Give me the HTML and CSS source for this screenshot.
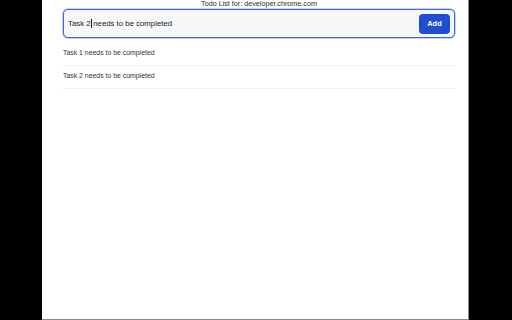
FILE: index.html
```html
<!DOCTYPE html>
<html>
<head>
<meta charset="utf-8">
<link rel="stylesheet" href="styles.css">
</head>
<body>
<div class="page">
  <div class="title">Todo List for: developer.chrome.com</div>
  <div class="entry">
    <div class="field">Task 2<span class="caret"></span> needs to be completed</div>
    <button class="add">Add</button>
  </div>
  <ul class="list">
    <li class="item">Task 1 needs to be completed</li>
    <li class="item">Task 2 needs to be completed</li>
  </ul>
</div>
</body>
</html>
```
FILE: styles.css
```css
html, body {
  margin: 0;
  padding: 0;
  background: #000;
  height: 320px;
  overflow: hidden;
}
body {
  font-family: "Liberation Sans", Arial, sans-serif;
  color: #222;
}
.page {
  margin-left: 42px;
  width: 392px;
  height: 319px;
  padding: 0 13px 0 21px;
  background: #fff;
  border-right: 1px solid #8a8a8a;
  border-bottom: 1px solid #8a8a8a;
}
.title {
  height: 9px;
  font-size: 7.2px;
  line-height: 8px;
  text-align: center;
  color: #2a2a2a;
}
.entry {
  display: flex;
  align-items: center;
  justify-content: space-between;
  height: 27px;
  border: 1px solid #4169d6;
  box-shadow: 0 0 0 0.5px #8aa3e6;
  border-radius: 5px;
  background: #f6f7f9;
  padding: 0 4px 0 4px;
}
.field {
  font-size: 7.8px;
  color: #1c1c1c;
  display: flex;
  align-items: center;
  white-space: pre;
}
.caret {
  display: inline-block;
  width: 1px;
  height: 9px;
  background: #222;
  margin-left: 0.5px;
  margin-right: -1px;
}
.add {
  width: 31px;
  height: 20px;
  border: none;
  border-radius: 4px;
  background: #1f4fd0;
  color: #fff;
  font-family: "Liberation Sans", Arial, sans-serif;
  font-weight: bold;
  font-size: 7.5px;
  padding: 0;
}
.list {
  list-style: none;
  margin: 5px 0 0 0;
  padding: 0;
}
.item {
  height: 22px;
  line-height: 20px;
  font-size: 6.9px;
  color: #333;
  border-bottom: 1px solid #f0f0f0;
}
```
